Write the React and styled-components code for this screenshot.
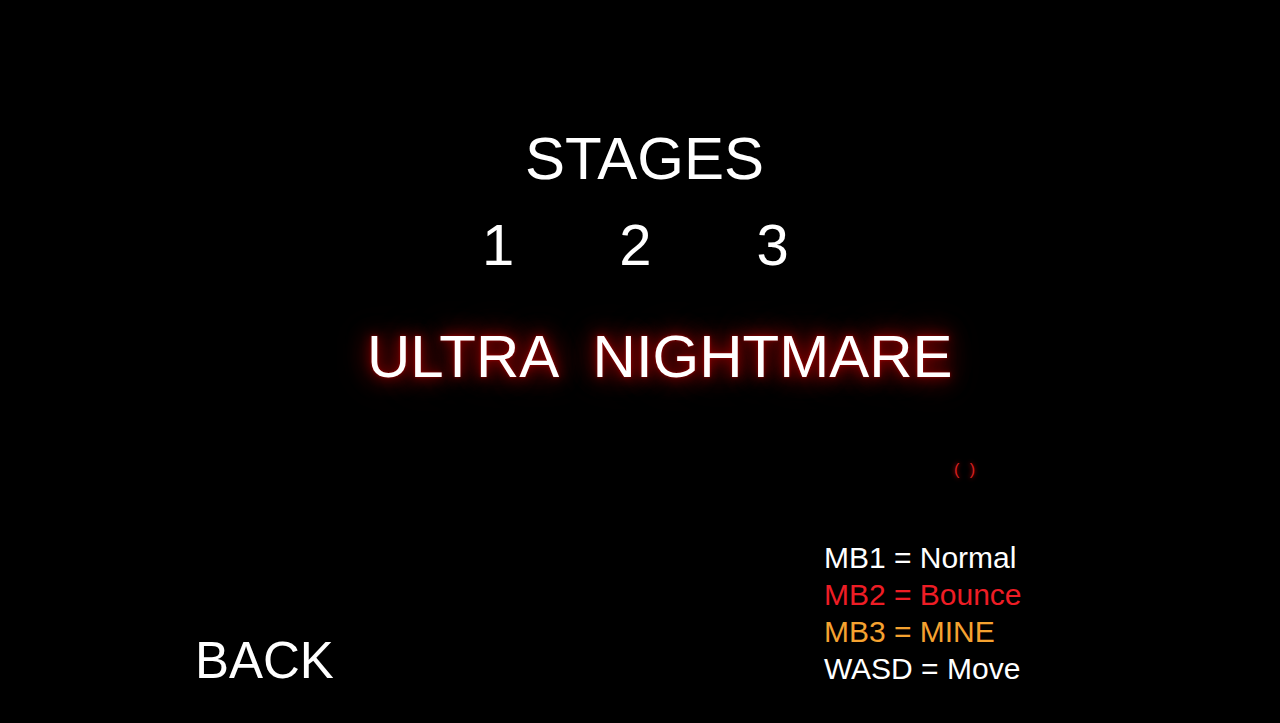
import React from 'react';
import styled, { createGlobalStyle } from 'styled-components';

const GlobalStyle = createGlobalStyle`
  html, body {
    margin: 0;
    padding: 0;
    background: #000;
  }
  body {
    font-family: "Liberation Sans", Arial, sans-serif;
    color: #fff;
  }
`;

const Screen = styled.div`
  width: 100vw;
  height: 100vh;
  background: #000;
  overflow: hidden;
  display: flex;
  flex-direction: column;
  align-items: flex-start;
`;

const Title = styled.h1`
  margin: 129px 0 0 525px;
  font-size: 60px;
  line-height: 60px;
  font-weight: 400;
  color: #fff;
`;

const StageRow = styled.div`
  display: flex;
  gap: 105px;
  margin: 27px 0 0 482px;
`;

const StageButton = styled.button`
  background: none;
  border: none;
  padding: 0;
  font-family: inherit;
  font-size: 58px;
  line-height: 58px;
  color: #fff;
  cursor: pointer;
`;

const Difficulty = styled.div`
  margin: 53px 0 0 367px;
  font-size: 60px;
  line-height: 60px;
  word-spacing: 20px;
  color: #fff;
  text-shadow: 0 0 3px rgba(180, 0, 0, 0.8), 0 0 12px rgba(150, 0, 0, 0.9),
    0 0 22px rgba(130, 0, 0, 0.9), 0 0 34px rgba(110, 0, 0, 0.85),
    0 0 46px rgba(90, 0, 0, 0.7);
`;

const Indicator = styled.div`
  margin: 75px 0 0 954px;
  font-size: 16px;
  line-height: 16px;
  letter-spacing: 3px;
  color: #d82020;
  text-shadow: 0 0 4px rgba(255, 0, 0, 0.8);
`;

const BottomRow = styled.div`
  display: flex;
  align-items: flex-end;
  margin: 61px 0 0 195px;
`;

const BackButton = styled.button`
  background: none;
  border: none;
  padding: 0;
  margin-bottom: 1px;
  font-family: inherit;
  font-size: 51px;
  line-height: 51px;
  color: #fff;
  cursor: pointer;
`;

const Legend = styled.ul`
  list-style: none;
  margin: 0 0 0 490px;
  padding: 0;
`;

const LegendItem = styled.li`
  font-size: 30px;
  line-height: 37px;
  white-space: nowrap;
  color: ${(p) => p.$color};
`;

const controls = [
  { label: 'MB1 = Normal', color: '#ffffff' },
  { label: 'MB2 = Bounce', color: '#ee1d25' },
  { label: 'MB3 = MINE', color: '#f5a230' },
  { label: 'WASD = Move', color: '#ffffff' },
];

export default function App() {
  return (
    <>
      <GlobalStyle />
      <Screen>
        <Title>STAGES</Title>
        <StageRow>
          {[1, 2, 3].map((n) => (
            <StageButton key={n}>{n}</StageButton>
          ))}
        </StageRow>
        <Difficulty>ULTRA NIGHTMARE</Difficulty>
        <Indicator>( )</Indicator>
        <BottomRow>
          <BackButton>BACK</BackButton>
          <Legend>
            {controls.map((c) => (
              <LegendItem key={c.label} $color={c.color}>
                {c.label}
              </LegendItem>
            ))}
          </Legend>
        </BottomRow>
      </Screen>
    </>
  );
}
